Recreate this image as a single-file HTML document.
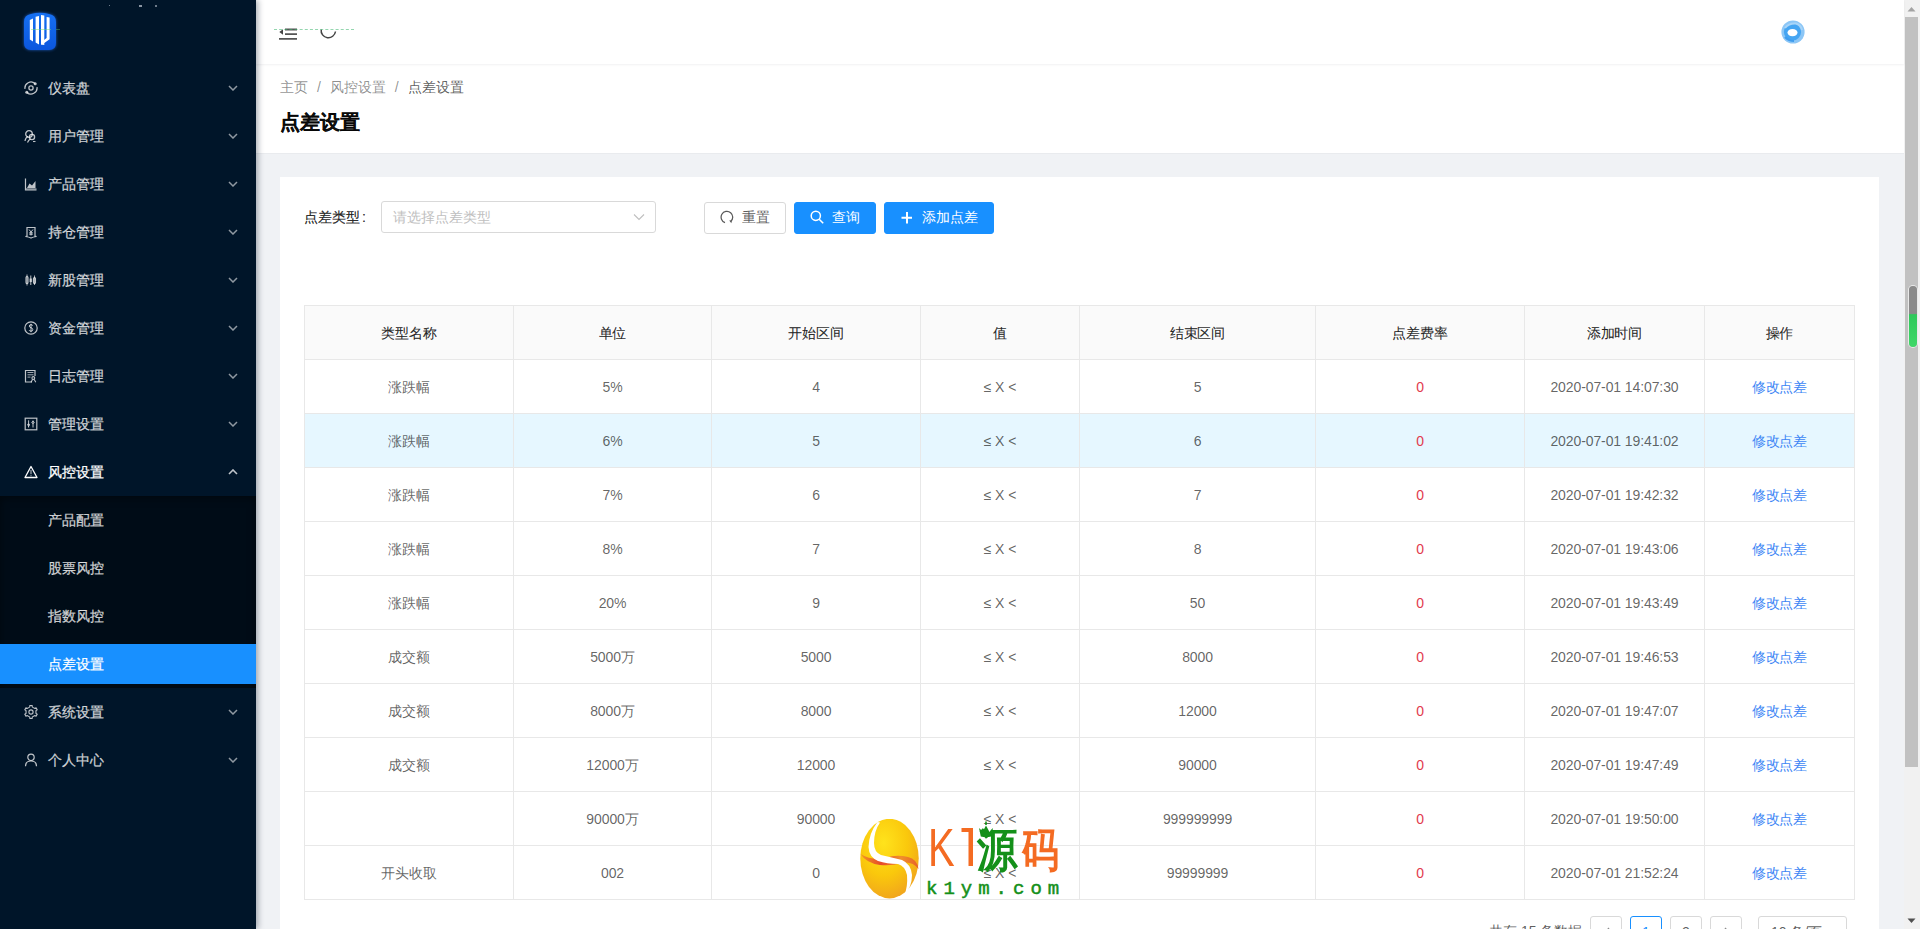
<!DOCTYPE html>
<html><head><meta charset="utf-8">
<style>
*{box-sizing:border-box;margin:0;padding:0}
html,body{width:1920px;height:929px;overflow:hidden;background:#f0f2f5;font-family:"Liberation Sans",sans-serif;font-size:14px;color:rgba(0,0,0,.65)}
#side{position:absolute;left:0;top:0;width:256px;height:929px;background:#001529;box-shadow:2px 0 6px rgba(0,21,41,.35);z-index:3}
.logo{position:absolute;left:24px;top:12px;width:32px;height:38px}
.mi{position:absolute;left:0;width:256px;height:40px;line-height:39px;color:rgba(255,255,255,.75);font-size:14px}
.mi .ic{position:absolute;left:24px;top:13px;width:14px;height:14px}
.mi .tx{position:absolute;left:48px;top:1px;-webkit-text-stroke:.25px currentColor}
.mi .ar{position:absolute;left:228px;top:17px;width:10px;height:6px;opacity:.75}
.sub{position:absolute;left:0;top:496px;width:256px;height:192px;background:#000c17;box-shadow:inset 0 2px 8px rgba(0,0,0,.45)}
.mi.act{background:#1890ff;color:#fff}
#hdr{position:absolute;left:256px;top:0;width:1648px;height:64px;background:#fff;box-shadow:0 1px 2px rgba(0,21,41,.06);z-index:2}
#crumb{position:absolute;left:256px;top:64px;width:1648px;height:89px;background:#fff;box-shadow:0 1px 0 #e9ebee}
#card{position:absolute;left:280px;top:177px;width:1599px;height:800px;background:#fff}
#sb{position:absolute;left:1904px;top:0;width:16px;height:929px;background:#f1f1f1}
.sep{margin:0 8px;color:rgba(0,0,0,.45);display:inline-block;width:5.8px;text-align:center}
.sel{position:absolute;left:101px;top:24px;width:275px;height:32px;border:1px solid #d9d9d9;border-radius:3px;background:#fff}
.sel .ph{position:absolute;left:11px;top:4px;line-height:22px;color:#bfbfbf}
.btn{position:absolute;top:25px;height:32px;line-height:28px;border:1px solid #d9d9d9;border-radius:3px;background:#fff;color:rgba(0,0,0,.65)}
.btn.pri{background:#1890ff;border-color:#1890ff;color:#fff}
#tbl{position:absolute;left:0;top:0}
.hl{position:absolute;left:304px;width:1551px;height:1px;background:#e8e8e8}
.vl{position:absolute;top:305px;width:1px;height:595px;background:#e8e8e8}
.c{position:absolute;height:53px;line-height:55px;text-align:center;color:rgba(0,0,0,.62);white-space:nowrap;letter-spacing:-.1px}
.c.h{color:rgba(0,0,0,.85);-webkit-text-stroke:.12px currentColor}
.red{color:#e23a4e}
.lnk{color:#3d86f5}
.pi{position:absolute;top:916px;width:32px;height:32px;border:1px solid #d9d9d9;border-radius:3px;background:#fff;line-height:30px;text-align:center;color:rgba(0,0,0,.65)}
.pi.act{border-color:#1890ff;color:#1890ff}
.pi span{position:absolute;left:0;right:0;top:0}
#wm{position:absolute;left:860px;top:819px;width:210px;height:90px;z-index:5}
</style></head><body>
<div id="side">
  <svg class="logo" viewBox="0 0 32 38" width="32" height="38" style="position:absolute;left:24px;top:12px;filter:drop-shadow(0 0 1.5px rgba(40,120,255,.7))">
    <defs><linearGradient id="lg" x1="0" y1="0" x2="0" y2="1"><stop offset="0" stop-color="#1670f2"/><stop offset="1" stop-color="#0b56de"/></linearGradient></defs>
    <path d="M7 2 Q16 -0.5 25 2 Q32 3 32 10 V31 Q32 38 25 38 H7 Q0 38 0 31 V10 Q0 3 7 2Z" fill="url(#lg)"/>
    <path d="M5.8 8 L9 6.5 V29.5 L5.8 27.5Z" fill="#fff"/>
    <path d="M11.6 4.8 L15 4 V32.5 L11.6 30.5Z" fill="#fff"/>
    <path d="M17 3 L20.3 3.6 V33 L17 32.5Z" fill="#fff"/>
    <path d="M22.6 5 L25.6 5.6 V27.2 L17.5 33 V30 L22.6 26Z" fill="#fff"/>
  </svg>
  <div style="position:absolute;left:31px;top:29px;width:20px;height:1px;background:rgba(110,220,110,.45)"></div>
  <div style="position:absolute;left:56px;top:29px;width:4px;height:1px;background:rgba(110,220,110,.35)"></div>
    <div style="position:absolute;left:139px;top:5px;width:3px;height:2px;background:rgba(230,235,245,.6)"></div>
  <div style="position:absolute;left:155px;top:5px;width:2px;height:2px;background:rgba(220,225,235,.5)"></div>
  <div style="position:absolute;left:109px;top:5px;width:1px;height:1px;background:rgba(220,225,235,.5)"></div>
  <div class="mi" style="top:68px"><svg class="ic" viewBox="0 0 14 14"><path d="M1 7.8A6 6 0 0 1 11 2.6" fill="none" stroke="currentColor" stroke-width="1.3"/><path d="M13 6.2A6 6 0 0 1 3 11.4" fill="none" stroke="currentColor" stroke-width="1.3"/><circle cx="11.2" cy="2.8" r="1.5" fill="currentColor"/><circle cx="2.8" cy="11.2" r="1.5" fill="currentColor"/><circle cx="7" cy="7" r="2.1" fill="none" stroke="currentColor" stroke-width="1.3"/></svg><span class="tx">仪表盘</span><svg class="ar" viewBox="0 0 10 6"><path d="M1 1L5 5L9 1" fill="none" stroke="currentColor" stroke-width="1.5"/></svg></div>
  <div class="mi" style="top:116px"><svg class="ic" viewBox="0 0 14 14"><circle cx="5" cy="5" r="3.3" fill="none" stroke="currentColor" stroke-width="1.3"/><circle cx="8" cy="8" r="2.6" fill="none" stroke="currentColor" stroke-width="1.3"/><path d="M1 12Q1.5 8.5 4 7.5M3.5 13.5Q4.5 11 6.5 10" fill="none" stroke="currentColor" stroke-width="1.2"/><path d="M9 12.5H11.5" stroke="currentColor" stroke-width="1.1"/></svg><span class="tx">用户管理</span><svg class="ar" viewBox="0 0 10 6"><path d="M1 1L5 5L9 1" fill="none" stroke="currentColor" stroke-width="1.5"/></svg></div>
  <div class="mi" style="top:164px"><svg class="ic" viewBox="0 0 14 14"><path d="M1.5 1.5V13H12.5" fill="none" stroke="currentColor" stroke-width="1.2"/><path d="M3 11L5.5 6.5L8 8.5L11.5 4V11Z" fill="currentColor"/><path d="M2 11H12.5V12.8H2Z" fill="currentColor" opacity=".55"/></svg><span class="tx">产品管理</span><svg class="ar" viewBox="0 0 10 6"><path d="M1 1L5 5L9 1" fill="none" stroke="currentColor" stroke-width="1.5"/></svg></div>
  <div class="mi" style="top:212px"><svg class="ic" viewBox="0 0 14 14"><path d="M3 2.5H11V11L12.5 11.5Q9 12 7 13Q5 12 1.5 11.5L3 11Z" fill="none" stroke="currentColor" stroke-width="1.2"/><path d="M5 4.5L7 7L9 4.5M7 7V10.5M5.2 7.8H8.8M5.2 9.2H8.8" fill="none" stroke="currentColor" stroke-width="1"/></svg><span class="tx">持仓管理</span><svg class="ar" viewBox="0 0 10 6"><path d="M1 1L5 5L9 1" fill="none" stroke="currentColor" stroke-width="1.5"/></svg></div>
  <div class="mi" style="top:260px"><svg class="ic" viewBox="0 0 14 14"><path d="M3 1.5V12.5M10.5 2.5V12" stroke="currentColor" stroke-width=".9"/><rect x="2" y="3.5" width="2" height="7" rx="1" fill="none" stroke="currentColor" stroke-width="1.1"/><rect x="9.5" y="4.5" width="2" height="6" rx="1" fill="none" stroke="currentColor" stroke-width="1.1"/><path d="M6.7 2.5V12" stroke="currentColor" stroke-width="1.4" opacity=".7"/><rect x="5.5" y="5.5" width="2.6" height="3.5" fill="currentColor" opacity=".8"/></svg><span class="tx">新股管理</span><svg class="ar" viewBox="0 0 10 6"><path d="M1 1L5 5L9 1" fill="none" stroke="currentColor" stroke-width="1.5"/></svg></div>
  <div class="mi" style="top:308px"><svg class="ic" viewBox="0 0 14 14"><circle cx="7" cy="7" r="6.2" fill="none" stroke="currentColor" stroke-width="1.2"/><path d="M8.8 4.6Q8.2 3.7 7 3.7Q5.3 3.7 5.3 5.1Q5.3 6.3 7 6.7Q8.8 7.2 8.8 8.6Q8.8 10.2 7 10.2Q5.6 10.2 5.1 9.2M7 2.8V11.2" fill="none" stroke="currentColor" stroke-width="1"/></svg><span class="tx">资金管理</span><svg class="ar" viewBox="0 0 10 6"><path d="M1 1L5 5L9 1" fill="none" stroke="currentColor" stroke-width="1.5"/></svg></div>
  <div class="mi" style="top:356px"><svg class="ic" viewBox="0 0 14 14"><path d="M8 13H1.5V1.5H11V7" fill="none" stroke="currentColor" stroke-width="1.2"/><path d="M3.5 3.5H9.5M3.5 5.8H9.5M3.5 8.1H6.5" stroke="currentColor" stroke-width=".85"/><circle cx="9.3" cy="9" r="1.4" fill="none" stroke="currentColor" stroke-width="1.1"/><path d="M7 13.2L8.5 10.5M11.8 13.2L10.2 10.5" stroke="currentColor" stroke-width="1.1"/></svg><span class="tx">日志管理</span><svg class="ar" viewBox="0 0 10 6"><path d="M1 1L5 5L9 1" fill="none" stroke="currentColor" stroke-width="1.5"/></svg></div>
  <div class="mi" style="top:404px"><svg class="ic" viewBox="0 0 14 14"><rect x="1.2" y="1.2" width="11.6" height="11.6" fill="none" stroke="currentColor" stroke-width="1.2"/><path d="M4.6 3.3V10.5M9 3.5V10.5" stroke="currentColor" stroke-width="1"/><path d="M4.6 6.8L5.8 8L4.6 9.2L3.4 8Z M9 4.2L10.2 5.4L9 6.6L7.8 5.4Z" fill="none" stroke="currentColor" stroke-width="1"/></svg><span class="tx">管理设置</span><svg class="ar" viewBox="0 0 10 6"><path d="M1 1L5 5L9 1" fill="none" stroke="currentColor" stroke-width="1.5"/></svg></div>
  <div class="mi open" style="top:452px;color:#fff"><svg class="ic" viewBox="0 0 14 14"><path d="M7 1.5L13 12.5H1Z" fill="none" stroke="currentColor" stroke-width="1.3" stroke-linejoin="round"/><path d="M7 5V9.3M7 10.3V11.2" stroke="currentColor" stroke-width="1.1" opacity=".7"/></svg><span class="tx">风控设置</span><svg class="ar" viewBox="0 0 10 6"><path d="M1 5L5 1L9 5" fill="none" stroke="currentColor" stroke-width="1.6"/></svg></div>
  <div class="sub"></div>
  <div class="mi" style="top:500px"><span class="tx">产品配置</span></div>
  <div class="mi" style="top:548px"><span class="tx">股票风控</span></div>
  <div class="mi" style="top:596px"><span class="tx">指数风控</span></div>
  <div class="mi act" style="top:644px"><span class="tx">点差设置</span></div>
  <div class="mi" style="top:692px"><svg class="ic" viewBox="0 0 14 14"><path d="M5.13 2.36 L5.81 1.84 L5.85 0.50 L8.15 0.50 L8.19 1.84 L8.87 2.36 L10.08 3.06 L10.88 3.39 L12.06 2.76 L13.20 4.74 L12.07 5.45 L11.95 6.30 L11.95 7.70 L12.07 8.55 L13.20 9.26 L12.06 11.24 L10.88 10.61 L10.08 10.94 L8.87 11.64 L8.19 12.16 L8.15 13.50 L5.85 13.50 L5.81 12.16 L5.13 11.64 L3.92 10.94 L3.12 10.61 L1.94 11.24 L0.80 9.26 L1.93 8.55 L2.05 7.70 L2.05 6.30 L1.93 5.45 L0.80 4.74 L1.94 2.76 L3.12 3.39 L3.92 3.06Z" fill="none" stroke="currentColor" stroke-width="1.1" stroke-linejoin="round"/><circle cx="7" cy="7" r="2.1" fill="none" stroke="currentColor" stroke-width="1.1"/></svg><span class="tx">系统设置</span><svg class="ar" viewBox="0 0 10 6"><path d="M1 1L5 5L9 1" fill="none" stroke="currentColor" stroke-width="1.5"/></svg></div>
  <div class="mi" style="top:740px"><svg class="ic" viewBox="0 0 14 14"><circle cx="7" cy="4.3" r="3.2" fill="none" stroke="currentColor" stroke-width="1.2"/><path d="M1.5 13.2Q1.5 8 7 8Q12.5 8 12.5 13.2" fill="none" stroke="currentColor" stroke-width="1.2"/></svg><span class="tx">个人中心</span><svg class="ar" viewBox="0 0 10 6"><path d="M1 1L5 5L9 1" fill="none" stroke="currentColor" stroke-width="1.5"/></svg></div>
</div>
<div id="hdr">
  <svg style="position:absolute;left:23px;top:22px" width="20" height="20" viewBox="0 0 20 20"><path d="M6 7.5H18M6 12.2H18M0 16.9H18" stroke="#555" stroke-width="1.8"/><path d="M0.3 10L4 7.3V12.7Z" fill="#444"/></svg>
  <svg style="position:absolute;left:63px;top:22px" width="20" height="18" viewBox="0 0 20 18"><path d="M2.2 7.5A7.2 7.2 0 0 0 16.5 9.5" fill="none" stroke="#444" stroke-width="1.5"/></svg>
  <div style="position:absolute;left:18px;top:29px;width:80px;border-top:1.5px dashed rgba(60,180,110,.55)"></div>
  <svg style="position:absolute;left:1525px;top:20px" width="24" height="24" viewBox="0 0 24 24"><circle cx="12" cy="12" r="11.6" fill="#8cc6f6"/><circle cx="11.5" cy="12" r="8.6" fill="#45a5f2"/><path d="M4 8Q8 3 15 3.5Q20 5 21 10" stroke="#a9d5f8" stroke-width="2" fill="none"/><ellipse cx="11.5" cy="12.6" rx="5" ry="3.7" fill="#fff"/><path d="M4 17Q8 21 13 21" stroke="#3f9cee" stroke-width="2.2" fill="none"/></svg>
</div>
<div id="crumb">
  <div style="position:absolute;left:24px;top:12px;line-height:22px;white-space:nowrap"><span style="color:rgba(0,0,0,.45)">主页</span><span class="sep">/</span><span style="color:rgba(0,0,0,.45)">风控设置</span><span class="sep">/</span><span style="color:rgba(0,0,0,.65)">点差设置</span></div>
  <div style="position:absolute;left:24px;top:42px;line-height:32px;font-size:20px;font-weight:bold;color:rgba(0,0,0,.85);-webkit-text-stroke:.25px currentColor">点差设置</div>
</div>
<div id="card">
  <div style="position:absolute;left:24px;top:29px;line-height:22px;color:rgba(0,0,0,.85);-webkit-text-stroke:.2px currentColor">点差类型<span style="margin-left:2px">:</span></div>
  <div class="sel"><span class="ph">请选择点差类型</span><svg style="position:absolute;left:251px;top:11px" width="12" height="8" viewBox="0 0 12 8"><path d="M1 1.5L6 6.5L11 1.5" fill="none" stroke="#bfbfbf" stroke-width="1.1"/></svg></div>
  <div class="btn" style="left:424px;width:82px"><svg style="position:absolute;left:15px;top:7px" width="14" height="14" viewBox="0 0 14 14"><path d="M5 12.6A5.8 5.8 0 1 1 10.6 11.6" fill="none" stroke="#595959" stroke-width="1.25"/><path d="M9.2 10.6L11.8 10.4L11.4 13.2Z" fill="#595959"/></svg><span style="position:absolute;left:37px;top:0">重置</span></div>
  <div class="btn pri" style="left:514px;width:82px"><svg style="position:absolute;left:15px;top:7px" width="14" height="14" viewBox="0 0 14 14"><circle cx="5.8" cy="5.8" r="4.6" fill="none" stroke="#fff" stroke-width="1.5"/><path d="M9.2 9.2L13.2 13.2" stroke="#fff" stroke-width="1.6"/></svg><span style="position:absolute;left:37px;top:0">查询</span></div>
  <div class="btn pri" style="left:604px;width:110px"><svg style="position:absolute;left:16px;top:8px" width="12" height="13" viewBox="0 0 12 13"><path d="M6 1V12.5M0.5 6.8H11" stroke="#fff" stroke-width="2"/></svg><span style="position:absolute;left:37px;top:0">添加点差</span></div>
</div>
<div id="tbl">
<div style="position:absolute;left:304px;top:305px;width:1550px;height:54px;background:#fafafa"></div>
<div style="position:absolute;left:304px;top:413px;width:1550px;height:54px;background:#e6f7ff"></div>
<div class="hl" style="top:305px"></div>
<div class="hl" style="top:359px"></div>
<div class="hl" style="top:413px"></div>
<div class="hl" style="top:467px"></div>
<div class="hl" style="top:521px"></div>
<div class="hl" style="top:575px"></div>
<div class="hl" style="top:629px"></div>
<div class="hl" style="top:683px"></div>
<div class="hl" style="top:737px"></div>
<div class="hl" style="top:791px"></div>
<div class="hl" style="top:845px"></div>
<div class="hl" style="top:899px"></div>
<div class="vl" style="left:304px"></div>
<div class="vl" style="left:513px"></div>
<div class="vl" style="left:711px"></div>
<div class="vl" style="left:920px"></div>
<div class="vl" style="left:1079px"></div>
<div class="vl" style="left:1315px"></div>
<div class="vl" style="left:1524px"></div>
<div class="vl" style="left:1704px"></div>
<div class="vl" style="left:1854px"></div>
<div class="c h" style="left:305px;top:306px;width:208px">类型名称</div>
<div class="c h" style="left:514px;top:306px;width:197px">单位</div>
<div class="c h" style="left:712px;top:306px;width:208px">开始区间</div>
<div class="c h" style="left:921px;top:306px;width:158px">值</div>
<div class="c h" style="left:1080px;top:306px;width:235px">结束区间</div>
<div class="c h" style="left:1316px;top:306px;width:208px">点差费率</div>
<div class="c h" style="left:1525px;top:306px;width:179px">添加时间</div>
<div class="c h" style="left:1705px;top:306px;width:149px">操作</div>
<div class="c" style="left:305px;top:360px;width:208px">涨跌幅</div>
<div class="c" style="left:514px;top:360px;width:197px">5%</div>
<div class="c" style="left:712px;top:360px;width:208px">4</div>
<div class="c" style="left:921px;top:360px;width:158px">≤ X &lt;</div>
<div class="c" style="left:1080px;top:360px;width:235px">5</div>
<div class="c" style="left:1316px;top:360px;width:208px"><span class="red">0</span></div>
<div class="c" style="left:1525px;top:360px;width:179px">2020-07-01 14:07:30</div>
<div class="c" style="left:1705px;top:360px;width:149px"><span class="lnk">修改点差</span></div>
<div class="c" style="left:305px;top:414px;width:208px">涨跌幅</div>
<div class="c" style="left:514px;top:414px;width:197px">6%</div>
<div class="c" style="left:712px;top:414px;width:208px">5</div>
<div class="c" style="left:921px;top:414px;width:158px">≤ X &lt;</div>
<div class="c" style="left:1080px;top:414px;width:235px">6</div>
<div class="c" style="left:1316px;top:414px;width:208px"><span class="red">0</span></div>
<div class="c" style="left:1525px;top:414px;width:179px">2020-07-01 19:41:02</div>
<div class="c" style="left:1705px;top:414px;width:149px"><span class="lnk">修改点差</span></div>
<div class="c" style="left:305px;top:468px;width:208px">涨跌幅</div>
<div class="c" style="left:514px;top:468px;width:197px">7%</div>
<div class="c" style="left:712px;top:468px;width:208px">6</div>
<div class="c" style="left:921px;top:468px;width:158px">≤ X &lt;</div>
<div class="c" style="left:1080px;top:468px;width:235px">7</div>
<div class="c" style="left:1316px;top:468px;width:208px"><span class="red">0</span></div>
<div class="c" style="left:1525px;top:468px;width:179px">2020-07-01 19:42:32</div>
<div class="c" style="left:1705px;top:468px;width:149px"><span class="lnk">修改点差</span></div>
<div class="c" style="left:305px;top:522px;width:208px">涨跌幅</div>
<div class="c" style="left:514px;top:522px;width:197px">8%</div>
<div class="c" style="left:712px;top:522px;width:208px">7</div>
<div class="c" style="left:921px;top:522px;width:158px">≤ X &lt;</div>
<div class="c" style="left:1080px;top:522px;width:235px">8</div>
<div class="c" style="left:1316px;top:522px;width:208px"><span class="red">0</span></div>
<div class="c" style="left:1525px;top:522px;width:179px">2020-07-01 19:43:06</div>
<div class="c" style="left:1705px;top:522px;width:149px"><span class="lnk">修改点差</span></div>
<div class="c" style="left:305px;top:576px;width:208px">涨跌幅</div>
<div class="c" style="left:514px;top:576px;width:197px">20%</div>
<div class="c" style="left:712px;top:576px;width:208px">9</div>
<div class="c" style="left:921px;top:576px;width:158px">≤ X &lt;</div>
<div class="c" style="left:1080px;top:576px;width:235px">50</div>
<div class="c" style="left:1316px;top:576px;width:208px"><span class="red">0</span></div>
<div class="c" style="left:1525px;top:576px;width:179px">2020-07-01 19:43:49</div>
<div class="c" style="left:1705px;top:576px;width:149px"><span class="lnk">修改点差</span></div>
<div class="c" style="left:305px;top:630px;width:208px">成交额</div>
<div class="c" style="left:514px;top:630px;width:197px">5000万</div>
<div class="c" style="left:712px;top:630px;width:208px">5000</div>
<div class="c" style="left:921px;top:630px;width:158px">≤ X &lt;</div>
<div class="c" style="left:1080px;top:630px;width:235px">8000</div>
<div class="c" style="left:1316px;top:630px;width:208px"><span class="red">0</span></div>
<div class="c" style="left:1525px;top:630px;width:179px">2020-07-01 19:46:53</div>
<div class="c" style="left:1705px;top:630px;width:149px"><span class="lnk">修改点差</span></div>
<div class="c" style="left:305px;top:684px;width:208px">成交额</div>
<div class="c" style="left:514px;top:684px;width:197px">8000万</div>
<div class="c" style="left:712px;top:684px;width:208px">8000</div>
<div class="c" style="left:921px;top:684px;width:158px">≤ X &lt;</div>
<div class="c" style="left:1080px;top:684px;width:235px">12000</div>
<div class="c" style="left:1316px;top:684px;width:208px"><span class="red">0</span></div>
<div class="c" style="left:1525px;top:684px;width:179px">2020-07-01 19:47:07</div>
<div class="c" style="left:1705px;top:684px;width:149px"><span class="lnk">修改点差</span></div>
<div class="c" style="left:305px;top:738px;width:208px">成交额</div>
<div class="c" style="left:514px;top:738px;width:197px">12000万</div>
<div class="c" style="left:712px;top:738px;width:208px">12000</div>
<div class="c" style="left:921px;top:738px;width:158px">≤ X &lt;</div>
<div class="c" style="left:1080px;top:738px;width:235px">90000</div>
<div class="c" style="left:1316px;top:738px;width:208px"><span class="red">0</span></div>
<div class="c" style="left:1525px;top:738px;width:179px">2020-07-01 19:47:49</div>
<div class="c" style="left:1705px;top:738px;width:149px"><span class="lnk">修改点差</span></div>
<div class="c" style="left:514px;top:792px;width:197px">90000万</div>
<div class="c" style="left:712px;top:792px;width:208px">90000</div>
<div class="c" style="left:921px;top:792px;width:158px">≤ X &lt;</div>
<div class="c" style="left:1080px;top:792px;width:235px">999999999</div>
<div class="c" style="left:1316px;top:792px;width:208px"><span class="red">0</span></div>
<div class="c" style="left:1525px;top:792px;width:179px">2020-07-01 19:50:00</div>
<div class="c" style="left:1705px;top:792px;width:149px"><span class="lnk">修改点差</span></div>
<div class="c" style="left:305px;top:846px;width:208px">开头收取</div>
<div class="c" style="left:514px;top:846px;width:197px">002</div>
<div class="c" style="left:712px;top:846px;width:208px">0</div>
<div class="c" style="left:921px;top:846px;width:158px">≤ X &lt;</div>
<div class="c" style="left:1080px;top:846px;width:235px">99999999</div>
<div class="c" style="left:1316px;top:846px;width:208px"><span class="red">0</span></div>
<div class="c" style="left:1525px;top:846px;width:179px">2020-07-01 21:52:24</div>
<div class="c" style="left:1705px;top:846px;width:149px"><span class="lnk">修改点差</span></div>
</div>
<div id="pag">
  <span style="position:absolute;left:1489px;top:923px;color:rgba(0,0,0,.65);white-space:nowrap">共有 15 条数据</span>
  <div class="pi" style="left:1590px"><svg style="position:absolute;left:12px;top:10px" width="8" height="12" viewBox="0 0 8 12"><path d="M6 1L1.5 6L6 11" fill="none" stroke="rgba(0,0,0,.45)" stroke-width="1.3"/></svg></div>
  <div class="pi act" style="left:1630px"><span>1</span></div>
  <div class="pi" style="left:1670px"><span>2</span></div>
  <div class="pi" style="left:1710px"><svg style="position:absolute;left:12px;top:10px" width="8" height="12" viewBox="0 0 8 12"><path d="M2 1L6.5 6L2 11" fill="none" stroke="rgba(0,0,0,.45)" stroke-width="1.3"/></svg></div>
  <div class="pi" style="left:1758px;width:89px;text-align:left"><span style="left:12px">10 条/页</span></div>
</div>
<div id="wm">
  <svg style="position:absolute;left:0;top:0" width="60" height="82" viewBox="0 0 60 82">
    <defs>
      <radialGradient id="eg" cx=".4" cy=".3" r=".75"><stop offset="0" stop-color="#ffe31c"/><stop offset=".55" stop-color="#fac80c"/><stop offset="1" stop-color="#f0a21e"/></radialGradient>
      <linearGradient id="og" x1="0" y1="0" x2="1" y2="0"><stop offset="0" stop-color="#f39a22"/><stop offset=".35" stop-color="#e64a2a"/><stop offset=".7" stop-color="#f0902a"/><stop offset="1" stop-color="#e8602a"/></linearGradient>
    </defs>
    <ellipse cx="29.5" cy="39.6" rx="29.2" ry="39.8" fill="url(#eg)"/>
    <path d="M0.5 35Q6 44 20 46Q32 47 42 44Q52 42 58.5 50Q57 40 48 38Q36 35 26 39Q12 42 0.5 35Z" fill="url(#og)"/>
    <path d="M17.5 3Q9 14 8.5 28Q9 38 18 42Q27 45 38 45Q45 47 47 56Q48 68 44 77Q52 68 52 56Q51 45 42 41Q30 38 21 36Q14 33 14 24Q14 12 20 3.5Z" fill="#fff"/>
  </svg>
  <div style="position:absolute;left:68px;top:0px;font-size:54px;line-height:56px;color:#f46b22;transform:scaleX(.74);transform-origin:0 0">K</div><svg style="position:absolute;left:100px;top:8px" width="15" height="40" viewBox="0 0 15 40"><path d="M1.5 1H13V39H8.5V5H1.5Z" fill="#f46b22"/></svg>
  <div style="position:absolute;left:117px;top:4px;font-size:46px;line-height:54px;font-weight:bold;color:#14901a;transform:scaleX(.88);transform-origin:0 0">源</div>
  <div style="position:absolute;left:162px;top:4px;font-size:46px;line-height:54px;font-weight:bold;color:#f46b22;transform:scaleX(.8);transform-origin:0 0">码</div>
  <div style="position:absolute;left:66px;top:59px;font-size:19px;line-height:22px;font-family:'Liberation Mono',monospace;color:#14901a;-webkit-text-stroke:.5px #14901a;letter-spacing:6px;white-space:nowrap">k1ym.com</div>
  <svg style="position:absolute;left:118px;top:2px" width="16" height="17" viewBox="0 0 16 17"><path d="M8 0.5V4" stroke="#14901a" stroke-width="1.6"/><path d="M7.2 2.5H8.8" stroke="#14901a" stroke-width="1.2"/><path d="M1 7Q3.5 9 4.5 11L8 4.5L11.5 11Q12.5 9 15 7L13.2 15.5Q8 17 2.8 15.5Z" fill="#14901a"/></svg>
</div>
<div id="sb">
  <svg style="position:absolute;left:3px;top:6px" width="9" height="6" viewBox="0 0 9 6"><path d="M0.5 5.5L4.5 1L8.5 5.5Z" fill="#a3a3a3"/></svg>
  <div style="position:absolute;left:1px;top:17px;width:13px;height:750px;background:#c1c1c1"></div>
  <div style="position:absolute;left:5px;top:286px;width:8px;height:61px;border-radius:4px;background:linear-gradient(#8a8a8a 0,#8a8a8a 45%,#2ec85a 47%,#3fd868 100%);box-shadow:0 0 0 1px #e9e9e9"></div>
  <svg style="position:absolute;left:3px;top:918px" width="9" height="6" viewBox="0 0 9 6"><path d="M0.5 0.5L4.5 5L8.5 0.5Z" fill="#505050"/></svg>
</div>
</body></html>
